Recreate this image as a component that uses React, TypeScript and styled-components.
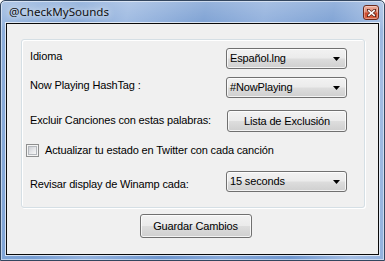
import React from 'react';
import styled, { createGlobalStyle } from 'styled-components';

const Global = createGlobalStyle`
  html, body { margin: 0; padding: 0; background: #ffffff; }
  * { box-sizing: border-box; }
`;

const Window = styled.div`
  width: 385px;
  height: 261px;
  border: 1px solid #33465f;
  border-radius: 5px 5px 0 0;
  padding: 0 5px 5px 5px;
  display: flex;
  flex-direction: column;
  background:
    linear-gradient(180deg, rgba(255,255,255,0.28) 0px, rgba(255,255,255,0.12) 22px, rgba(255,255,255,0) 30px),
    linear-gradient(100deg, #8fb0dc 0%, #769dd2 18%, #93b2de 30%, #6e96ce 48%, #86a8d9 62%, #6f97cf 78%, #a3bde3 92%, #92b1dd 100%);
  box-shadow: inset 0 0 0 1px rgba(255,255,255,0.5);
`;

const TitleBar = styled.div`
  height: 22px;
  display: flex;
  align-items: flex-start;
  justify-content: space-between;
  padding-left: 3px;
`;

const Title = styled.span`
  margin-top: 3px;
  font-family: "Noto Sans", "Segoe UI", sans-serif;
  font-size: 11.6px;
  line-height: 16px;
  color: #111;
  text-shadow: 0 0 6px rgba(255,255,255,0.9), 0 0 10px rgba(255,255,255,0.6);
`;

const CloseButton = styled.div`
  width: 16px;
  height: 15px;
  margin-top: 4px;
  border: 1px solid #6b2a1d;
  border-radius: 3px;
  background: linear-gradient(180deg, #eeb0a0 0%, #e08a72 45%, #cc4a2e 55%, #dc6442 100%);
  box-shadow: inset 0 0 0 1px rgba(255,255,255,0.35);
  display: flex;
  align-items: center;
  justify-content: center;
`;

const Client = styled.div`
  flex: 1;
  background: #f0f0f0;
  border: 1px solid #0a0a0a;
  box-shadow: 0 0 0 1px rgba(255,255,255,0.7);
  display: flex;
  flex-direction: column;
  padding: 15px 13px 0 14px;
  font-family: "Liberation Sans", Arial, sans-serif;
  font-size: 11px;
  line-height: 13px;
  letter-spacing: -0.15px;
  color: #000;
`;

const GroupBox = styled.div`
  height: 169px;
  border: 1px solid #d5dfe5;
  border-radius: 3px;
  box-shadow: inset 1px 1px 0 #ffffff, 1px 1px 0 #ffffff;
  padding: 8px 17px 0 8px;
  display: flex;
  flex-direction: column;
`;

const Row = styled.div<{ $h: number; $mt: number }>`
  display: flex;
  align-items: flex-start;
  justify-content: space-between;
  height: ${(p) => p.$h}px;
  margin-top: ${(p) => p.$mt}px;
`;

const Label = styled.span<{ $dy: number }>`
  margin-top: ${(p) => p.$dy}px;
  white-space: nowrap;
`;

const ComboBox = styled.div`
  width: 121px;
  height: 21px;
  border: 1px solid #707070;
  border-radius: 3px;
  background: linear-gradient(180deg, #f2f2f2 0%, #ebebeb 48%, #dddddd 52%, #cfcfcf 100%);
  box-shadow: inset 0 0 0 1px rgba(255,255,255,0.75);
  display: flex;
  align-items: center;
  justify-content: space-between;
  padding: 0 6px 0 3px;
  white-space: nowrap;
`;

const PushButton = styled.div<{ $w: number; $h: number }>`
  width: ${(p) => p.$w}px;
  height: ${(p) => p.$h}px;
  border: 1px solid #707070;
  border-radius: 3px;
  background: linear-gradient(180deg, #f2f2f2 0%, #ebebeb 48%, #dddddd 52%, #cfcfcf 100%);
  box-shadow: inset 0 0 0 1px rgba(255,255,255,0.75);
  display: flex;
  align-items: center;
  justify-content: center;
  white-space: nowrap;
`;

const CheckRow = styled.div`
  display: flex;
  align-items: center;
  gap: 6px;
  height: 13px;
  margin: 12px 0 0 -4px;
`;

const CheckBox = styled.span`
  width: 13px;
  height: 13px;
  border: 1px solid #8e8f8f;
  background: #f4f4f4;
  padding: 1px;
  display: flex;
`;

const CheckInner = styled.span`
  flex: 1;
  border: 1px solid #b4b8bd;
  background: linear-gradient(135deg, #cdd0d5 0%, #e4e5e8 50%, #f7f7f7 100%);
`;

const Footer = styled.div`
  display: flex;
  justify-content: center;
  padding-left: 5px;
  margin-top: 6px;
`;

const Arrow = () => (
  <svg width="7" height="4" viewBox="0 0 7 4">
    <path d="M0 0 H7 L3.5 4 Z" fill="#000" />
  </svg>
);

const CloseGlyph = () => (
  <svg width="9" height="8" viewBox="0 0 9 8">
    <path d="M1 1 L8 7 M8 1 L1 7" stroke="#5a2418" strokeWidth="3" strokeLinecap="square" />
    <path d="M1.2 1.2 L7.8 6.8 M7.8 1.2 L1.2 6.8" stroke="#ffffff" strokeWidth="1.6" />
  </svg>
);

export default function App() {
  return (
    <>
      <Global />
      <Window>
        <TitleBar>
          <Title>@CheckMySounds</Title>
          <CloseButton>
            <CloseGlyph />
          </CloseButton>
        </TitleBar>
        <Client>
          <GroupBox>
            <Row $h={21} $mt={0}>
              <Label $dy={2}>Idioma</Label>
              <ComboBox>
                <span>Español.lng</span>
                <Arrow />
              </ComboBox>
            </Row>
            <Row $h={21} $mt={8}>
              <Label $dy={2}>Now Playing HashTag :</Label>
              <ComboBox>
                <span>#NowPlaying</span>
                <Arrow />
              </ComboBox>
            </Row>
            <Row $h={22} $mt={12}>
              <Label $dy={4}>Excluir Canciones con estas palabras:</Label>
              <PushButton $w={120} $h={22}>Lista de Exclusión</PushButton>
            </Row>
            <CheckRow>
              <CheckBox>
                <CheckInner />
              </CheckBox>
              <span>Actualizar tu estado en Twitter con cada canción</span>
            </CheckRow>
            <Row $h={21} $mt={14}>
              <Label $dy={7}>Revisar display de Winamp cada:</Label>
              <ComboBox>
                <span>15 seconds</span>
                <Arrow />
              </ComboBox>
            </Row>
          </GroupBox>
          <Footer>
            <PushButton $w={112} $h={24}>Guardar Cambios</PushButton>
          </Footer>
        </Client>
      </Window>
    </>
  );
}
